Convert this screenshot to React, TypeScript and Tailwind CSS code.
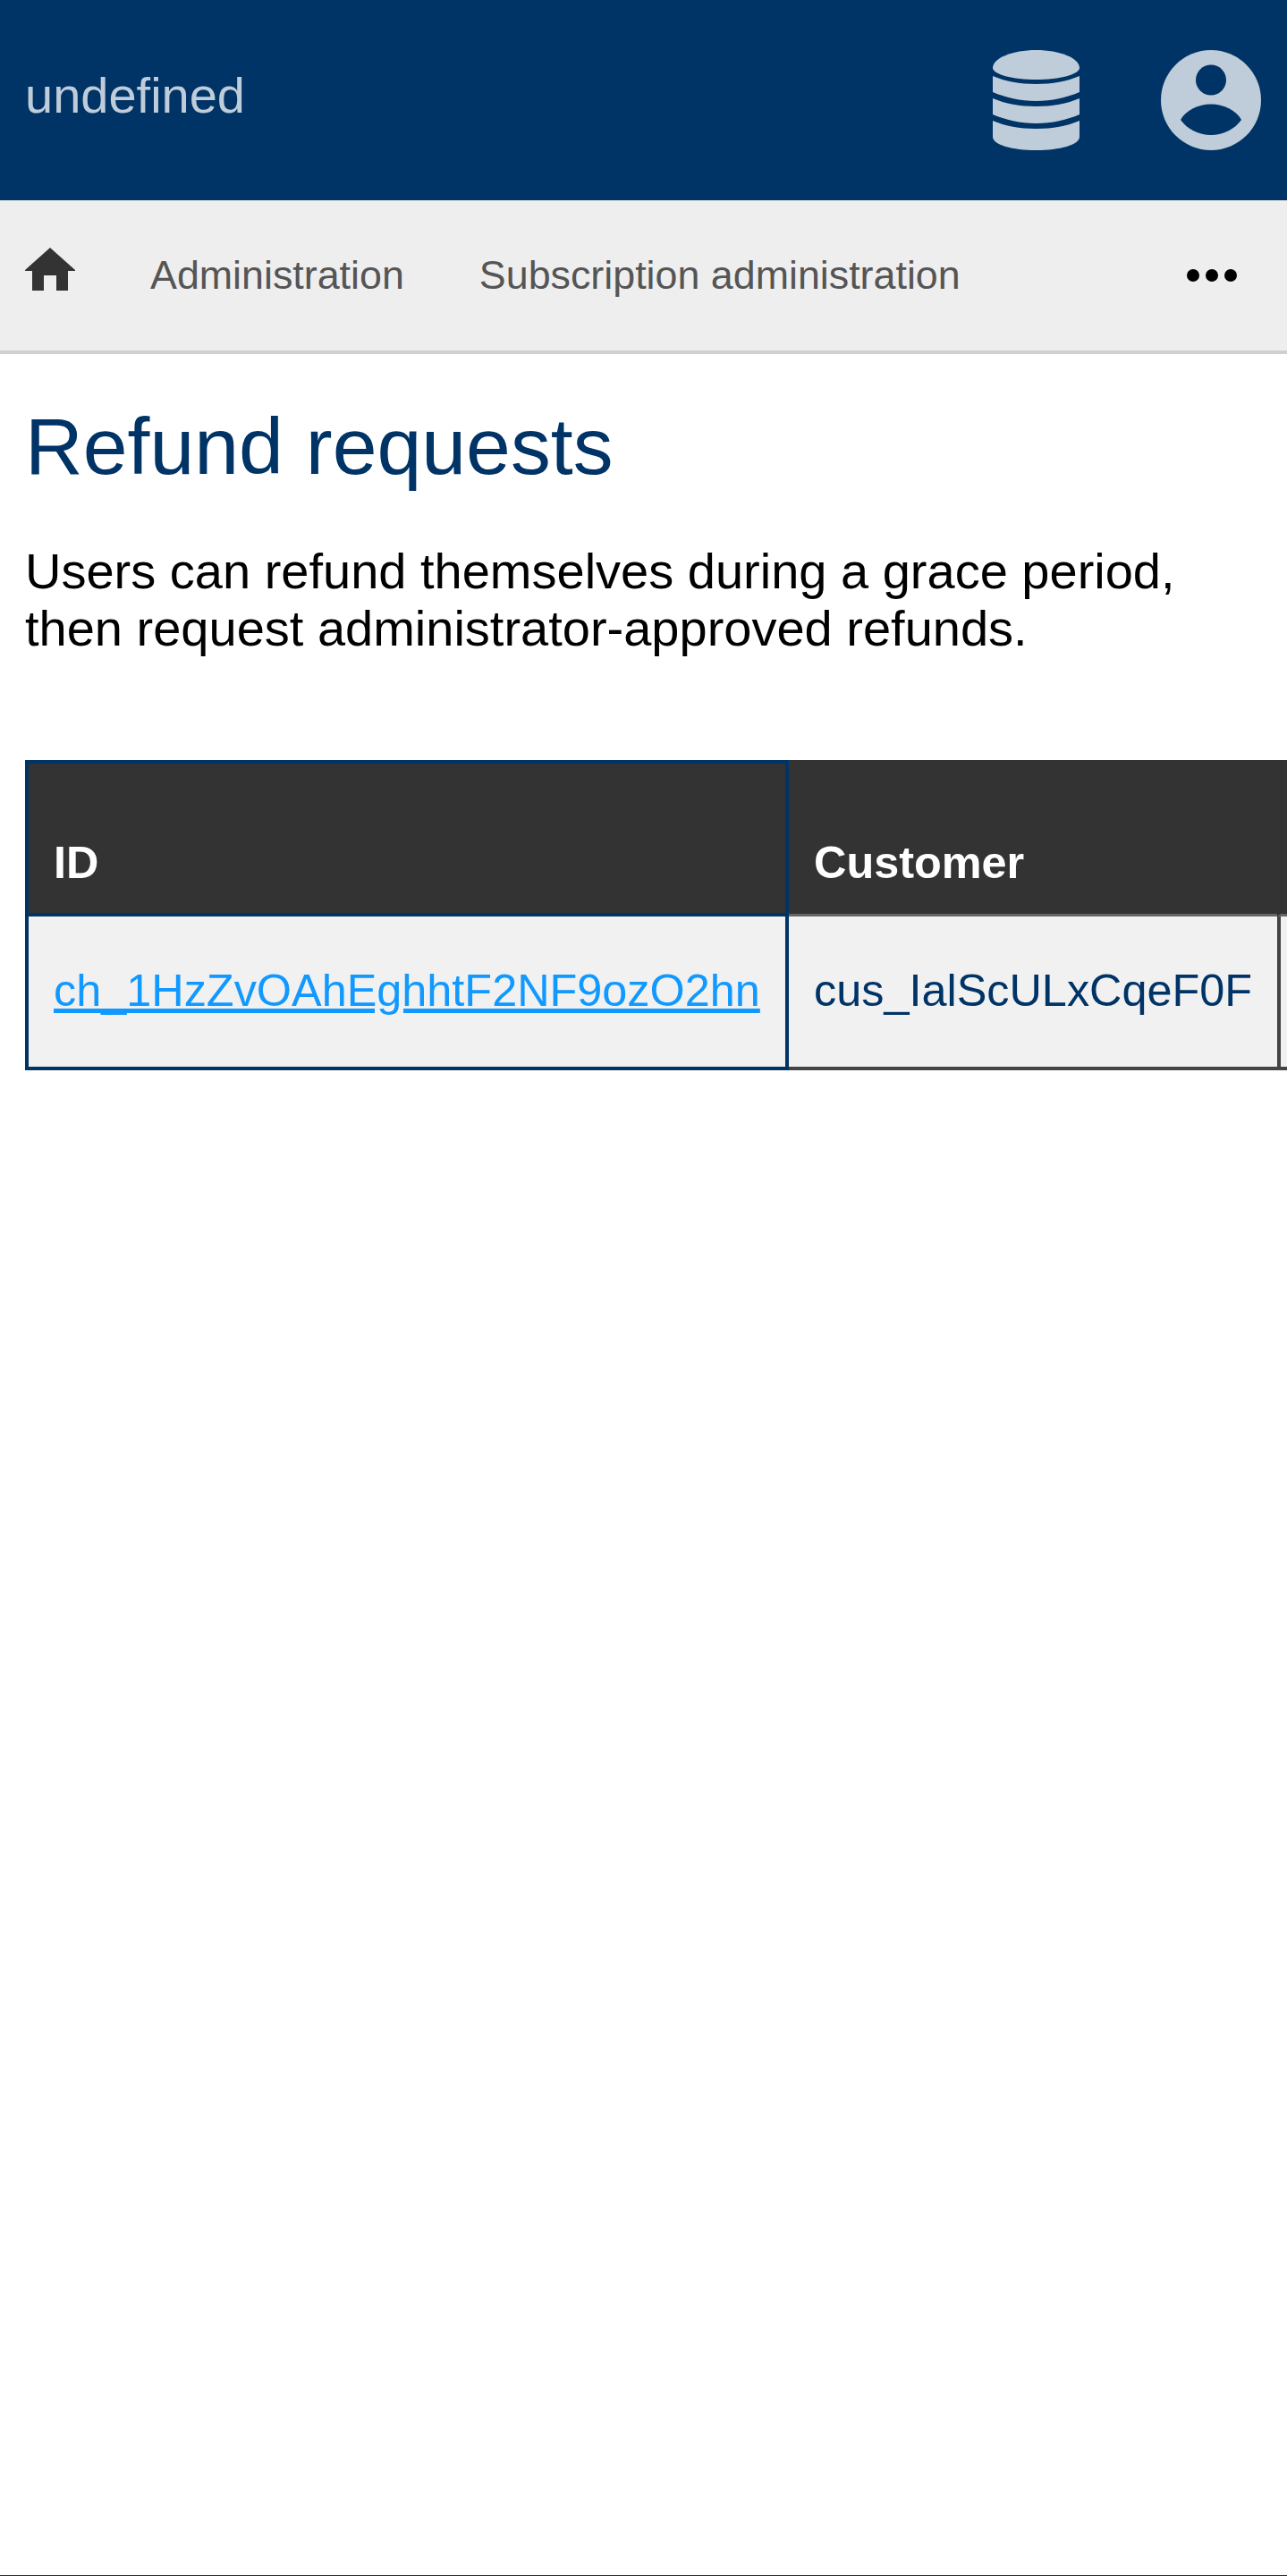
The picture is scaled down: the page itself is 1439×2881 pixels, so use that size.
const BRAND = '#003366';

function DatabaseIcon() {
  return (
    <svg viewBox="0 0 97 112" className="w-[97px] h-[112px]" fill="#bfccd9">
      <path d="M0 20C0 9 22 0 48.500 0S97 9 97 20C97 27 75 33 48.500 33S0 27 0 20z" />
      <path d="M0 29C14 35 30 38 48.500 38S83 35 97 29V47C83 53 66 57 48.500 57S14 53 0 47z" />
      <path d="M0 54C14 60 30 63 48.500 63S83 60 97 54V72C83 78 66 82 48.500 82S14 78 0 72z" />
      <path d="M0 79C14 85 30 88 48.500 88S83 85 97 79V97C97 106 75 112 48.500 112S0 106 0 97z" />
    </svg>
  );
}

function UserIcon() {
  return (
    <svg viewBox="0 0 112 112" className="w-[112px] h-[112px]">
      <circle cx="56" cy="56" r="56" fill="#bfccd9" />
      <circle cx="56" cy="33.500" r="17" fill={BRAND} />
      <path d="M22 78c6-11 20-17.500 34-17.500S84 67 90 78c-7 10-20 17-34 17S29 88 22 78z" fill={BRAND} />
    </svg>
  );
}

function HomeIcon() {
  return (
    <svg viewBox="0 0 56 48" className="w-[56px] h-[48px] mb-[14px]" fill="#333333">
      <path d="M28 0 56 25v1H48V48H35V31H21V48H8V26H0v-1z" />
    </svg>
  );
}

function MoreIcon() {
  return (
    <svg viewBox="0 0 56 14" className="w-[56px] h-[14px]" fill="#000000">
      <circle cx="7" cy="7" r="7" />
      <circle cx="28" cy="7" r="7" />
      <circle cx="49" cy="7" r="7" />
    </svg>
  );
}

export default function App() {
  return (
    <div className="min-h-[2881px] flex flex-col bg-white overflow-hidden font-['Liberation_Sans',Arial,sans-serif]">
      {/* Header */}
      <header className="h-[224px] bg-[#003366] flex items-center justify-between pl-[28px] pr-[29px]">
        <span className="text-[56px] text-[#bfccd9] mb-[11px]">undefined</span>
        <div className="flex items-center gap-[91px]">
          <DatabaseIcon />
          <UserIcon />
        </div>
      </header>

      {/* Nav */}
      <nav className="h-[172px] bg-[#eeeeee] border-b-[4px] border-[#d0d0d0] flex items-center pl-[28px] pr-[56px]">
        <HomeIcon />
        <a className="ml-[84px] text-[44.800px] text-[#555555]">Administration</a>
        <a className="ml-[84px] text-[44.800px] text-[#555555]">Subscription administration</a>
        <div className="ml-auto">
          <MoreIcon />
        </div>
      </nav>

      {/* Content */}
      <main className="flex-1 pl-[28px]">
        <h1 className="mt-[49px] text-[89.600px] leading-[108px] text-[#003366]">Refund requests</h1>
        <p className="mt-[54px] text-[56px] leading-[64px] text-black">
          Users can refund themselves during a grace period,
          <br />
          then request administrator-approved refunds.
        </p>

        <div className="mt-[115px] text-[50.400px]">
          {/* Head row */}
          <div className="flex h-[175px] bg-[#333333] font-bold text-white">
            <div className="w-[854px] shrink-0 border-[4px] border-[#003366] flex items-end pl-[28px] pb-[18px]">
              ID
            </div>
            <div className="w-[546px] shrink-0 border-b-[3px] border-[#666666] flex items-end pl-[28px] pb-[19px]">
              Customer
            </div>
            <div className="flex-1 border-l-[4px] border-b-[3px] border-l-[#333333] border-b-[#666666]" />
          </div>
          {/* Body row */}
          <div className="flex h-[172px] bg-[#f1f1f1]">
            <div className="w-[854px] shrink-0 border-[4px] border-t-0 border-[#003366] flex items-center pl-[28px] pb-[3px]">
              <a className="text-[#1199ff] underline">ch_1HzZvOAhEghhtF2NF9ozO2hn</a>
            </div>
            <div className="w-[546px] shrink-0 border-b-[4px] border-[#444444] flex items-center pl-[28px] pb-[3px] text-[#003366]">
              cus_IalScULxCqeF0F
            </div>
            <div className="flex-1 border-l-[4px] border-b-[4px] border-[#444444]" />
          </div>
        </div>
      </main>

      <footer className="h-px bg-[#003366]" />
    </div>
  );
}
